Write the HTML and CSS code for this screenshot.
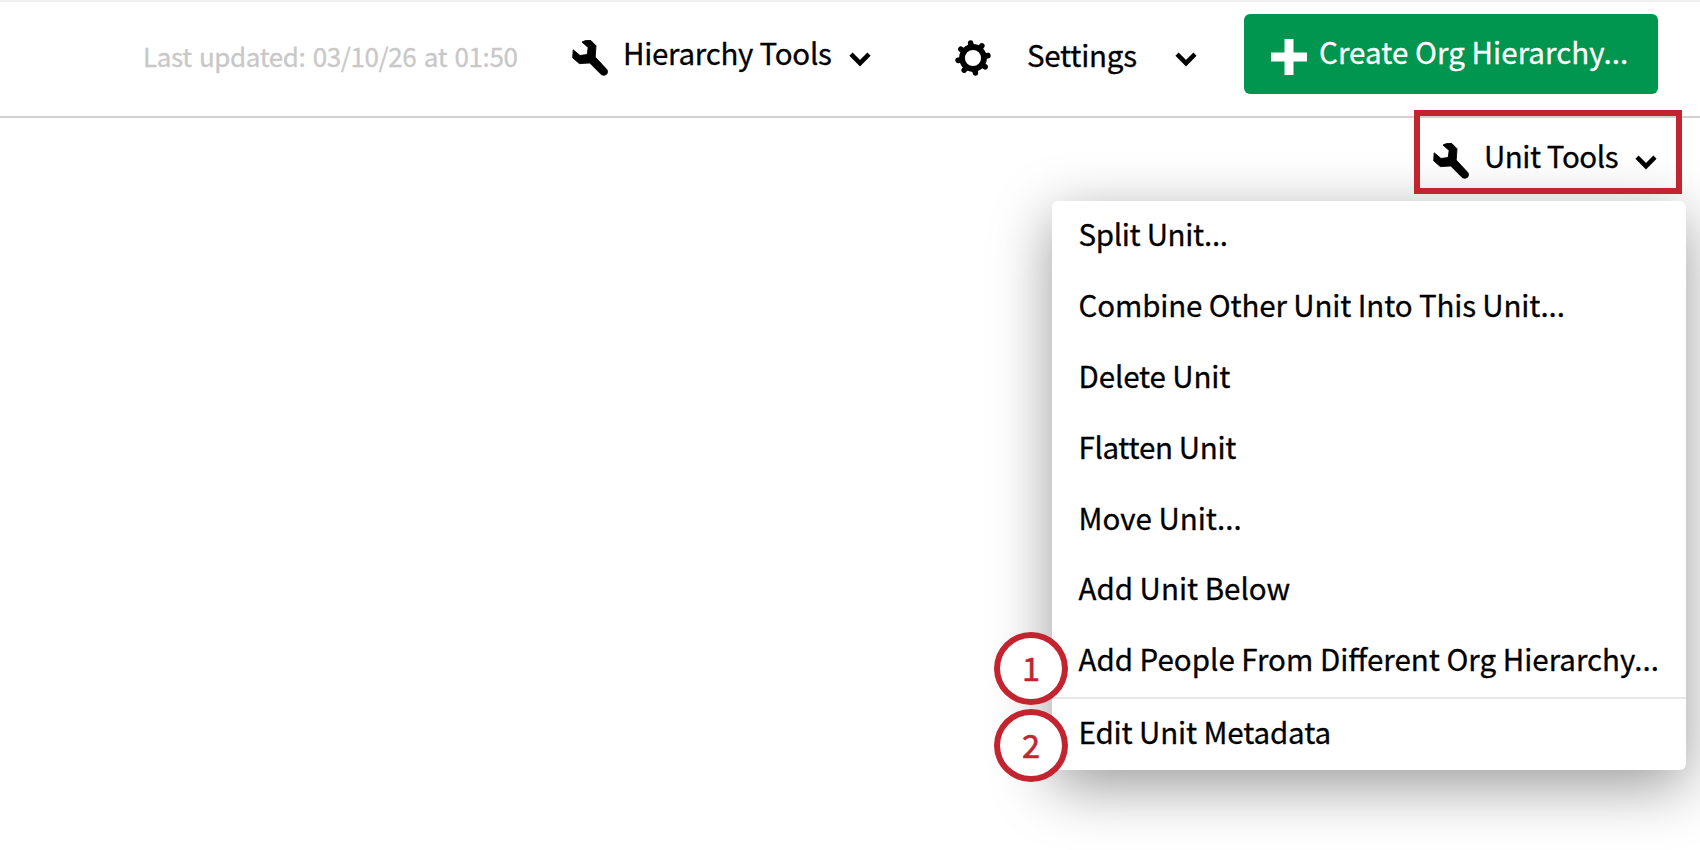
FILE: index.html
```
<!DOCTYPE html>
<html lang="en">
<head>
<meta charset="utf-8">
<title>Org Hierarchy</title>
<link rel="stylesheet" href="styles.css">
</head>
<body>
<svg class="defs" width="0" height="0" aria-hidden="true">
  <symbol id="wrench" viewBox="0 0 36 36"><path d="M10 2 L13.500 0.600 L18.800 0.500 L24 5.800 L23.200 17 L35 29.800 Q36.300 32.500 34.500 34.300 Q32.500 36 29.500 34.800 L17.800 23 L7.300 23.600 L0.700 17.800 L1.200 9.800 L8 15.500 L15.200 14.500 L16.200 7.500 Z" stroke="currentColor" stroke-width=".9" stroke-linejoin="round"/></symbol>
  <symbol id="chevron" viewBox="0 0 22 15"><path d="M2 2.200 L11 11.200 L20 2.200" fill="none" stroke="currentColor" stroke-width="4.500"/></symbol>
  <symbol id="gear" viewBox="0 0 36 36">
    <circle cx="18" cy="18" r="11" fill="none" stroke="currentColor" stroke-width="5.800"/>
    <path d="M18 5V2.900M18 31V33.100M5 18H2.900M31 18H33.100M8.800 8.800L7.400 7.400M27.200 8.800L28.600 7.400M8.800 27.200L7.400 28.600M27.200 27.200L28.600 28.600" stroke="currentColor" stroke-width="5.600" stroke-linecap="round" transform="rotate(-9 18 18)"/>
  </symbol>
</svg>
<header class="toolbar">
  <span class="updated">Last updated: 03/10/26 at 01:50</span>
  <div class="tool hierarchy"><svg class="icon"><use href="#wrench"/></svg><span class="label">Hierarchy Tools</span><svg class="chev"><use href="#chevron"/></svg></div>
  <div class="tool settings"><svg class="icon"><use href="#gear"/></svg><span class="label">Settings</span><svg class="chev"><use href="#chevron"/></svg></div>
  <button class="create"><svg class="icon" viewBox="0 0 36 36"><path d="M13.500 0H22.500V13.500H36V22.500H22.500V36H13.500V22.500H0V13.500H13.500Z"/></svg><span class="label">Create Org Hierarchy...</span></button>
</header>
<main>
  <div class="tool unit-tools"><svg class="icon"><use href="#wrench"/></svg><span class="label">Unit Tools</span><svg class="chev"><use href="#chevron"/></svg></div>
  <ul class="menu">
    <li class="tighter">Split Unit...</li>
    <li class="tight">Combine Other Unit Into This Unit...</li>
    <li class="tight">Delete Unit</li>
    <li class="tighter">Flatten Unit</li>
    <li>Move Unit...</li>
    <li>Add Unit Below</li>
    <li>Add People From Different Org Hierarchy...</li>
    <li class="edit tight">Edit Unit Metadata</li>
  </ul>
  <span class="step one">1</span>
  <span class="step two">2</span>
</main>
</body>
</html>
```
FILE: styles.css
```
* { box-sizing: border-box; }
body {
  margin: 0;
  width: 1700px;
  height: 850px;
  overflow: hidden;
  background: #fff;
  color: #000;
  font: 29.5px/44px "Noto Sans CJK SC", "Noto Sans", sans-serif;
  -webkit-text-stroke: .3px currentColor;
}
.defs { position: absolute; }
.toolbar {
  display: flex;
  height: 118px;
  border-top: 2px solid #efefef;
  border-bottom: 2px solid #d2d2d2;
  padding-left: 143px;
}
span { white-space: nowrap; }
.updated {
  width: 429px;
  margin-top: 32px;
  font-size: 26px;
  letter-spacing: -.4px;
  word-spacing: 2px;
  color: #c8c8c8;
}
.tool { display: flex; }
.icon { flex: none; width: 36px; height: 36px; fill: currentColor; }
.chev { flex: none; width: 22px; height: 15px; }
.hierarchy { width: 383px; }
.hierarchy .icon, .settings .icon { margin-top: 38px; }
.hierarchy .chev, .settings .chev { margin-top: 50px; }
.hierarchy .label { width: 226px; margin: 28px 0 0 15px; letter-spacing: -.27px; }
.settings { width: 289px; }
.settings .label { width: 148px; margin: 30px 0 0 36px; letter-spacing: -.25px; }
.create {
  display: flex;
  width: 414px;
  height: 80px;
  margin-top: 12px;
  padding: 0 0 0 27px;
  border: 0;
  border-radius: 6px;
  background: #009650;
  color: #fff;
  font: inherit;
}
.create .icon { margin-top: 25px; }
.create .label { margin: 15px 0 0 12px; letter-spacing: .06px; }
main { position: relative; height: 732px; }
.unit-tools {
  position: absolute;
  z-index: 2;
  left: 1414px;
  top: -8px;
  width: 268px;
  height: 84px;
  border: 6px solid #c32430;
  padding-left: 13px;
}
.unit-tools .icon { margin-top: 27px; }
.unit-tools .chev { margin-top: 39px; }
.unit-tools .label { width: 151px; margin: 17px 0 0 15px; letter-spacing: -.45px; }
.menu {
  position: absolute;
  left: 1052px;
  top: 83px;
  width: 634px;
  height: 569px;
  margin: 0;
  padding: 0;
  list-style: none;
  border-radius: 6px;
  background: #fff;
  box-shadow: 0 16px 60px rgba(0, 0, 0, .4);
}
.menu li { height: 70.9px; padding: 10px 0 0 26.5px; white-space: nowrap; }
.menu .tight { letter-spacing: -.13px; }
.menu .tighter { letter-spacing: -.32px; }
.menu .edit { border-top: 2px solid #e6e6e6; }
.step {
  position: absolute;
  left: 994px;
  width: 74px;
  height: 73px;
  border: 6px solid #c32430;
  border-radius: 50%;
  background: #fff;
  color: #c32430;
  font-size: 32.5px;
  line-height: 58px;
  text-align: center;
  -webkit-text-stroke-width: .6px;
}
.one { top: 514px; }
.two { top: 591px; }
```
